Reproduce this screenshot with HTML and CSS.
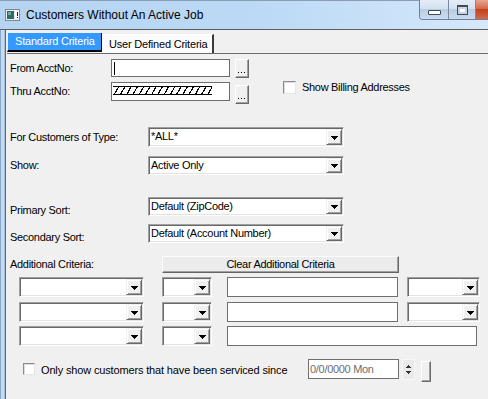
FILE: index.html
```html
<!DOCTYPE html>
<html>
<head>
<meta charset="utf-8">
<link rel="stylesheet" href="styles.css">
</head>
<body>
<div class="window">
  <div class="titlebar">
    <svg class="app-icon" width="16" height="13" viewBox="0 0 16 13" shape-rendering="crispEdges">
      <rect x="0.5" y="0.5" width="14" height="11" fill="#e9eef2" stroke="#7d8a94"/>
      <rect x="2" y="2" width="7" height="8" fill="#2f6b66"/>
      <rect x="3" y="3" width="3" height="3" fill="#6fa8a0"/>
      <rect x="10" y="2" width="4" height="8" fill="#ffffff"/>
      <rect x="12" y="3" width="1" height="4" fill="#222"/>
      <rect x="12" y="8" width="1" height="1" fill="#222"/>
    </svg>
    <span class="title">Customers Without An Active Job</span>
    <div class="caption">
      <div class="cap cap-min"><span class="glyph-min"></span></div>
      <div class="cap cap-max"><span class="glyph-max"></span></div>
      <div class="cap cap-close"></div>
    </div>
  </div>
  <div class="main">
    <div class="frame"></div>
    <div class="client">
      <div class="tabs">
        <div class="tab tab-active">Standard Criteria</div>
        <div class="tab tab-plain">User Defined Criteria</div>
      </div>
      <div class="panel">
        <div class="row r1">
          <span class="lbl w101">From AcctNo:</span>
          <div class="text acct"><span class="caret"></span></div>
          <div class="btn dots" title="..."><i></i><i></i><i></i></div>
        </div>
        <div class="row r2">
          <span class="lbl w101 lh19">Thru AcctNo:</span>
          <div class="text acct tall"><span class="hatch"></span></div>
          <div class="btn dots down3" title="..."><i></i><i></i><i></i></div>
          <div class="chk-wrap billing">
            <span class="chk"></span>
            <span class="chk-text">Show Billing Addresses</span>
          </div>
        </div>
        <div class="row r3">
          <span class="lbl w138 lh20">For Customers of Type:</span>
          <div class="combo big h20"><span class="val">*ALL*</span><span class="drop"><svg width="7" height="4" shape-rendering="crispEdges"><path d="M0 0h7v1H0zM1 1h5v1H1zM2 2h3v1H2zM3 3h1v1H3z"/></svg></span></div>
        </div>
        <div class="row r4">
          <span class="lbl w138 lh19">Show:</span>
          <div class="combo big"><span class="val">Active Only</span><span class="drop"><svg width="7" height="4" shape-rendering="crispEdges"><path d="M0 0h7v1H0zM1 1h5v1H1zM2 2h3v1H2zM3 3h1v1H3z"/></svg></span></div>
        </div>
        <div class="row r5">
          <span class="lbl w138 lh19 low">Primary Sort:</span>
          <div class="combo big"><span class="val">Default (ZipCode)</span><span class="drop"><svg width="7" height="4" shape-rendering="crispEdges"><path d="M0 0h7v1H0zM1 1h5v1H1zM2 2h3v1H2zM3 3h1v1H3z"/></svg></span></div>
        </div>
        <div class="row r6">
          <span class="lbl w138 lh19 low">Secondary Sort:</span>
          <div class="combo big"><span class="val">Default (Account Number)</span><span class="drop"><svg width="7" height="4" shape-rendering="crispEdges"><path d="M0 0h7v1H0zM1 1h5v1H1zM2 2h3v1H2zM3 3h1v1H3z"/></svg></span></div>
        </div>
        <div class="row r7">
          <span class="lbl w152 lh17">Additional Criteria:</span>
          <div class="btn clear">Clear Additional Criteria</div>
        </div>
        <div class="row crit r8">
          <div class="combo c1 h20"><span class="val"></span><span class="drop"><svg width="7" height="4" shape-rendering="crispEdges"><path d="M0 0h7v1H0zM1 1h5v1H1zM2 2h3v1H2zM3 3h1v1H3z"/></svg></span></div>
          <div class="combo c2 h20"><span class="val"></span><span class="drop"><svg width="7" height="4" shape-rendering="crispEdges"><path d="M0 0h7v1H0zM1 1h5v1H1zM2 2h3v1H2zM3 3h1v1H3z"/></svg></span></div>
          <div class="text t1"></div>
          <div class="combo c3 h20"><span class="val"></span><span class="drop"><svg width="7" height="4" shape-rendering="crispEdges"><path d="M0 0h7v1H0zM1 1h5v1H1zM2 2h3v1H2zM3 3h1v1H3z"/></svg></span></div>
        </div>
        <div class="row crit r9">
          <div class="combo c1 h20"><span class="val"></span><span class="drop"><svg width="7" height="4" shape-rendering="crispEdges"><path d="M0 0h7v1H0zM1 1h5v1H1zM2 2h3v1H2zM3 3h1v1H3z"/></svg></span></div>
          <div class="combo c2 h20"><span class="val"></span><span class="drop"><svg width="7" height="4" shape-rendering="crispEdges"><path d="M0 0h7v1H0zM1 1h5v1H1zM2 2h3v1H2zM3 3h1v1H3z"/></svg></span></div>
          <div class="text t1"></div>
          <div class="combo c3 h20"><span class="val"></span><span class="drop"><svg width="7" height="4" shape-rendering="crispEdges"><path d="M0 0h7v1H0zM1 1h5v1H1zM2 2h3v1H2zM3 3h1v1H3z"/></svg></span></div>
        </div>
        <div class="row crit r10">
          <div class="combo c1 h20"><span class="val"></span><span class="drop"><svg width="7" height="4" shape-rendering="crispEdges"><path d="M0 0h7v1H0zM1 1h5v1H1zM2 2h3v1H2zM3 3h1v1H3z"/></svg></span></div>
          <div class="combo c2 h20"><span class="val"></span><span class="drop"><svg width="7" height="4" shape-rendering="crispEdges"><path d="M0 0h7v1H0zM1 1h5v1H1zM2 2h3v1H2zM3 3h1v1H3z"/></svg></span></div>
          <div class="text t2"></div>
        </div>
        <div class="row r11">
          <span class="chk since-chk"></span>
          <span class="since-text">Only show customers that have been serviced since</span>
          <div class="text datebox">0/0/0000 Mon</div>
          <div class="spin">
            <svg width="5" height="3" shape-rendering="crispEdges"><path d="M2 0h1v1H2zM1 1h3v1H1zM0 2h5v1H0z" fill="#333"/></svg>
            <svg width="5" height="3" shape-rendering="crispEdges"><path d="M0 0h5v1H0zM1 1h3v1H1zM2 2h1v1H2z" fill="#333"/></svg>
          </div>
          <div class="btn tiny"></div>
        </div>
      </div>
    </div>
  </div>
</div>
</body>
</html>
```
FILE: styles.css
```css
* { box-sizing: border-box; }
html, body { margin: 0; padding: 0; }
body {
  width: 488px;
  height: 399px;
  overflow: hidden;
  background: #f0f0f0;
  font-family: "Liberation Sans", Arial, sans-serif;
  font-size: 11px;
  color: #000;
}
.window { display: flex; flex-direction: column; width: 488px; height: 399px; }

/* title bar */
.titlebar {
  height: 30px;
  display: flex;
  align-items: flex-start;
  background: linear-gradient(to right, #b5d4f2 0%, #bcdaf6 55%, #cde3f9 85%, #d6e9fb 100%);
  border-top: 1px solid #8b9db2;
  border-bottom: 1px solid #5e5e5e;
}
.app-icon { margin: 8px 0 0 5px; flex: none; }
.title {
  margin: 6px 0 0 5px;
  font-size: 12px;
  line-height: 16px;
  color: #000;
}
.caption {
  margin-left: auto;
  margin-top: -1px;
  display: flex;
  height: 20px;
  border-left: 1px solid #6f7f95;
  border-bottom: 1px solid #6f7f95;
  border-bottom-left-radius: 4px;
  overflow: hidden;
}
.cap {
  height: 19px;
  display: flex;
  align-items: center;
  justify-content: center;
  background: linear-gradient(#e4edf7 0%, #d3e1f0 45%, #b9cce2 50%, #cadcef 100%);
  border-right: 1px solid #7a8aa0;
}
.cap-min { width: 29px; }
.cap-max { width: 27px; }
.cap-close {
  width: 12px;
  border-right: none;
  background: linear-gradient(#e9a58f 0%, #d5694c 45%, #c2421e 50%, #d06a4c 100%);
}
.glyph-min {
  width: 13px;
  height: 5px;
  margin-top: 5px;
  background: #fff;
  border: 1px solid #3e4a5c;
  border-radius: 1px;
}
.glyph-max {
  width: 11px;
  height: 10px;
  margin-top: 1px;
  border: 1px solid #3e4a5c;
  border-top-width: 2px;
  background: #fff;
  box-shadow: inset 0 0 0 2px #c7d4e3;
}

/* main area */
.main { flex: 1; display: flex; min-height: 0; }
.frame {
  width: 7px;
  flex: none;
  background: linear-gradient(to right, #8aa6c6 0 1px, #c5dbf2 1px 4px, #a4bfdc 4px 5px, #5f6670 5px 6px, #f0f0f0 6px 7px);
}
.client { flex: 1; display: flex; flex-direction: column; }

/* tabs */
.tabs { display: flex; align-items: flex-start; height: 20px; margin-top: 3px; }
.tab { line-height: 17px; white-space: nowrap; letter-spacing: -0.2px; }
.tab-active {
  width: 95px;
  height: 19px;
  padding-left: 7px;
  background: #3399ff;
  color: #fff;
  border-right: 1px solid #000;
  border-bottom: 2px solid #000;
  border-left: 1px solid #e8f2fc;
}
.tab-plain {
  width: 112px;
  height: 19px;
  margin-top: 1px;
  padding-left: 7px;
  background: #fbfbfb;
  border-top: 1px solid #ffffff;
  border-right: 2px solid #3a3a3a;
  line-height: 18px;
}

/* panel */
.panel {
  flex: 1;
  border-top: 1px solid #6b6b6b;
  padding-left: 3px;
  display: flex;
  flex-direction: column;
}
.row { display: flex; align-items: flex-start; flex: none; }
.lbl { flex: none; white-space: nowrap; letter-spacing: -0.3px; line-height: 19px; }
.w101 { width: 101px; }
.w138 { width: 138px; }
.w152 { width: 152px; }
.lh17 { line-height: 17px; }
.lh19 { line-height: 19px; }
.lh20 { line-height: 20px; }
.low { padding-top: 4px; }

.r1 { margin-top: 5px; height: 19px; }
.r2 { margin-top: 4px; height: 22px; }
.r3 { margin-top: 23px; height: 20px; }
.r4 { margin-top: 9px; height: 19px; }
.r5 { margin-top: 22px; height: 19px; }
.r6 { margin-top: 8px; height: 19px; }
.r7 { margin-top: 13px; height: 17px; }
.r8 { margin-top: 4px; height: 20px; }
.r9 { margin-top: 5px; height: 20px; }
.r10 { margin-top: 4px; height: 20px; }
.r11 { margin-top: 13px; height: 22px; }
.crit { padding-left: 9px; }

/* text boxes */
.text {
  flex: none;
  background: #fff;
  border: 1px solid #6e6e6e;
  height: 20px;
}
.acct { width: 119px; height: 18px; display: flex; align-items: center; padding-left: 2px; }
.acct.tall { height: 19px; align-items: flex-start; }
.caret { width: 1px; height: 13px; background: #000; }
.hatch {
  display: block;
  width: 99px;
  height: 9px;
  margin-top: 3px;
  margin-left: -1px;
  border-top: 1px solid #000;
  border-bottom: 1px solid #000;
  background: repeating-linear-gradient(120deg, transparent 0 4.2px, #000 4.2px 5.4px);
}
.t1 { width: 171px; margin-left: 15px; }
.t2 { width: 250px; margin-left: 15px; }

/* buttons */
.btn {
  flex: none;
  background: #f0f0f0;
  border: 1px solid;
  border-color: #fff #6b6b6b #6b6b6b #fff;
  box-shadow: inset -1px -1px 0 #a0a0a0;
}
.dots {
  width: 14px;
  height: 19px;
  margin-left: 5px;
  display: flex;
  justify-content: center;
  align-items: flex-end;
  gap: 2px;
  padding-bottom: 4px;
  padding-right: 1px;
}
.dots i { display: block; width: 1px; height: 1px; background: #000; }
.down3 { margin-top: 3px; }
.clear {
  width: 237px;
  height: 17px;
  line-height: 14px;
  text-align: center;
  letter-spacing: -0.3px;
  border-color: #fdfdfd #646464 #646464 #fdfdfd;
  background: #ececec;
}
.tiny { width: 10px; height: 21px; margin-left: 6px; margin-top: 2px; }

/* checkboxes */
.chk-wrap { display: flex; align-items: center; }
.billing { margin-left: 34px; margin-top: -1px; height: 13px; }
.chk {
  flex: none;
  width: 13px;
  height: 13px;
  background: #fff;
  border: 1px solid;
  border-color: #8c8c8c #e6e6e6 #e6e6e6 #8c8c8c;
  box-shadow: inset 1px 1px 0 #dcdcdc;
}
.chk-text { margin-left: 6px; white-space: nowrap; letter-spacing: -0.3px; line-height: 13px; }
.since-chk { margin-left: 13px; margin-top: 4px; width: 12px; height: 12px; }
.since-text {
  width: 273px;
  flex: none;
  padding-left: 6px;
  line-height: 22px;
  white-space: nowrap;
  letter-spacing: -0.15px;
}
.datebox {
  width: 91px;
  height: 20px;
  padding-left: 1px;
  line-height: 18px;
  color: #6d6d6d;
  letter-spacing: -0.3px;
  white-space: nowrap;
}
.spin {
  flex: none;
  width: 13px;
  height: 21px;
  margin-left: 3px;
  background: #eaeaea;
  border: 1px solid #f8f8f8;
  display: flex;
  flex-direction: column;
  align-items: center;
  justify-content: center;
  gap: 3px;
}

/* combo boxes */
.combo {
  flex: none;
  display: flex;
  height: 19px;
  background: #fff;
  border: 1px solid;
  border-color: #a0a0a0 #fff #fff #a0a0a0;
  box-shadow: inset 1px 1px 0 #696969, inset -1px -1px 0 #e3e3e3;
  padding: 1px;
}
.h20 { height: 20px; }
.big { width: 196px; }
.c1 { width: 125px; }
.c2 { width: 50px; margin-left: 18px; }
.c3 { width: 73px; margin-left: 9px; }
.val {
  flex: 1;
  padding-left: 1px;
  line-height: 15px;
  white-space: nowrap;
  overflow: hidden;
  letter-spacing: -0.3px;
}
.drop {
  flex: none;
  width: 16px;
  background: #f0f0f0;
  border: 1px solid;
  border-color: #f0f0f0 #696969 #696969 #f0f0f0;
  box-shadow: inset 1px 1px 0 #fff, inset -1px -1px 0 #a0a0a0;
  display: flex;
  align-items: center;
  justify-content: center;
}
.drop svg { margin-top: 1px; }
```
